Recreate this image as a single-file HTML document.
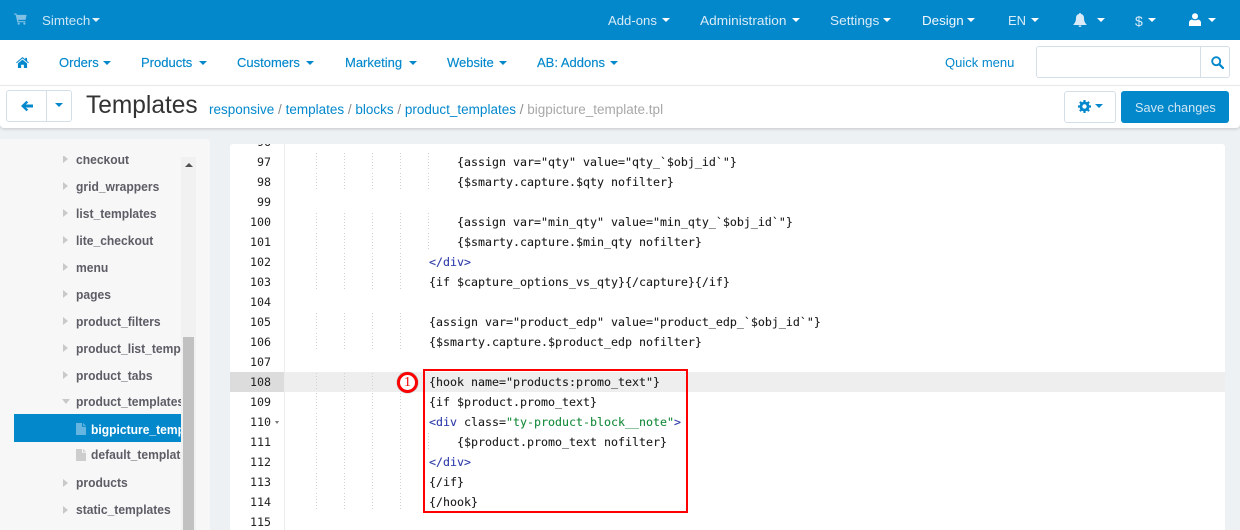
<!DOCTYPE html>
<html><head><meta charset="utf-8"><style>
html,body{margin:0;padding:0}
body{width:1240px;height:530px;overflow:hidden;position:relative;background:#eef1f4;font-family:"Liberation Sans",sans-serif}
.a{position:absolute;white-space:pre}
.t{position:absolute;white-space:pre;font-size:13px;line-height:16px;transform-origin:0 50%}
.c{position:absolute;width:0;height:0;border-left:4.500px solid transparent;border-right:4.500px solid transparent;border-top:4.500px solid currentColor}
.top{color:#d9ebf6}
.nav{color:#0388cc;-webkit-text-stroke:.15px #0388cc}
.tree{position:absolute;font-size:13px;line-height:16px;font-weight:bold;color:#5d5d66;white-space:pre;transform:scaleX(.93);transform-origin:0 50%}
.ar{position:absolute;left:63px;width:0;height:0;border-left:5px solid #c9c9c9;border-top:4px solid transparent;border-bottom:4px solid transparent}
.n{position:absolute;left:0;width:41px;text-align:right;font:11.63px/20px "DejaVu Sans Mono",monospace;color:#222}
.l{position:absolute;left:289px;font:11.63px/20px "DejaVu Sans Mono",monospace;color:#1a1a1a;white-space:pre;-webkit-text-stroke:.1px #1a1a1a}
.b{color:#2c3aa8;-webkit-text-stroke:.1px #2c3aa8}.s{color:#148a3a;-webkit-text-stroke:.1px #148a3a}
</style></head><body>
<div class="a" style="left:0;top:0;width:1240px;height:40px;background:#0388cc"></div>
<div class="a" style="left:0;top:40px;width:1240px;height:45px;background:#fff;border-bottom:1px solid #eef0f2"></div>
<div class="a" style="left:0;top:86px;width:1240px;height:42px;background:#fff;box-shadow:0 1px 3px rgba(0,0,0,.18);border-radius:0 0 4px 4px"></div>

<svg class="a" style="left:14px;top:13px" width="14" height="12" viewBox="0 0 15 13"><path d="M0 0.5H2.600L3 2H13.600L12.400 7.500H4.400L4.700 8.800H12.200V10H3.500L1.700 1.700H0Z" fill="#7fc0e4"/><circle cx="5" cy="11.500" r="1.200" fill="#7fc0e4"/><circle cx="11.200" cy="11.500" r="1.200" fill="#7fc0e4"/></svg>
<div class="t top" style="left:42px;top:12.500px;color:#cfe6f4;transform:scaleX(1.03)">Simtech</div><div class="c" style="left:92px;top:18px;color:#e3f1f9"></div>
<div class="t top" style="left:608px;top:12.500px;transform:scaleX(1.01)">Add-ons</div><div class="c" style="left:662px;top:18px;color:#fff"></div>
<div class="t top" style="left:700px;top:12.500px;transform:scaleX(1.05)">Administration</div><div class="c" style="left:792px;top:18px;color:#fff"></div>
<div class="t top" style="left:830px;top:12.500px;transform:scaleX(1.05)">Settings</div><div class="c" style="left:883px;top:18px;color:#fff"></div>
<div class="t top" style="left:922px;top:12.500px;color:#f2f8fc;transform:scaleX(1.03)">Design</div><div class="c" style="left:967px;top:18px;color:#fff"></div>
<div class="t top" style="left:1008px;top:12.500px">EN</div><div class="c" style="left:1031px;top:18px;color:#fff"></div>
<svg class="a" style="left:1073px;top:13px" width="14" height="14" viewBox="0 0 14 14"><path d="M7 0C7.600 0 8 .4 8 1C10 1.400 11 3 11 5C11 8 12 10 13.500 11.300V12H.5V11.300C2 10 3 8 3 5C3 3 4 1.400 6 1C6 .4 6.400 0 7 0ZM5.500 12.500H8.500C8.500 13.400 7.800 14 7 14C6.200 14 5.500 13.400 5.500 12.500Z" fill="#d9ebf6"/></svg>
<div class="c" style="left:1097px;top:18px;color:#fff"></div>
<div class="t top" style="left:1135px;top:12.500px;font-size:14px">$</div><div class="c" style="left:1148px;top:18px;color:#fff"></div>
<svg class="a" style="left:1189px;top:13px" width="12" height="13" viewBox="0 0 12 13"><circle cx="6" cy="3.200" r="3" fill="#fff"/><path d="M0 13V9.500C0 8 1.500 6.800 3 6.500C4 7.500 8 7.500 9 6.500C10.500 6.800 12 8 12 9.500V13Z" fill="#fff"/></svg>
<div class="c" style="left:1208px;top:18px;color:#fff"></div>

<svg class="a" style="left:16px;top:56.500px" width="13" height="11" viewBox="0 0 14 12"><path d="M7 0L10 2.600V1H12V4.300L14 6L13.300 6.800L7 1.500L.7 6.800L0 6ZM2 7L7 2.800L12 7V12H8.500V8.500H5.500V12H2Z" fill="#0388cc"/></svg>
<div class="t nav" style="left:59px;top:54.500px">Orders</div><div class="c" style="left:103px;top:61px;color:#0388cc"></div>
<div class="t nav" style="left:141px;top:54.500px">Products</div><div class="c" style="left:199px;top:61px;color:#0388cc"></div>
<div class="t nav" style="left:237px;top:54.500px">Customers</div><div class="c" style="left:306px;top:61px;color:#0388cc"></div>
<div class="t nav" style="left:345px;top:54.500px">Marketing</div><div class="c" style="left:409px;top:61px;color:#0388cc"></div>
<div class="t nav" style="left:447px;top:54.500px">Website</div><div class="c" style="left:499px;top:61px;color:#0388cc"></div>
<div class="t nav" style="left:537px;top:54.500px">AB: Addons</div><div class="c" style="left:610px;top:61px;color:#0388cc"></div>
<div class="t nav" style="left:945px;top:54.500px;-webkit-text-stroke:0">Quick menu</div>
<div class="a" style="left:1036px;top:46px;width:192px;height:30px;border:1px solid #d5dfe8;border-radius:3px;background:#fff"></div>
<div class="a" style="left:1200px;top:47px;width:1px;height:30px;background:#d5dfe8"></div>
<svg class="a" style="left:1211px;top:56px" width="13" height="13" viewBox="0 0 13 13"><circle cx="5.200" cy="5.200" r="4" fill="none" stroke="#0388cc" stroke-width="1.900"/><path d="M8.200 8.200L12 12" stroke="#0388cc" stroke-width="2.200" stroke-linecap="round"/></svg>

<div class="a" style="left:6px;top:90px;width:64px;height:30px;border:1px solid #d5dfe8;border-radius:3px;background:#fff"></div>
<div class="a" style="left:46px;top:91px;width:1px;height:30px;background:#d5dfe8"></div>
<svg class="a" style="left:21px;top:100px" width="12" height="12" viewBox="0 0 12 12"><path d="M0 6L5.500 .8L7.200 2.500L4.800 4.500H12V7.500H4.800L7.200 9.500L5.500 11.200Z" fill="#0388cc"/></svg>
<div class="c" style="left:55px;top:103px;color:#0388cc"></div>
<div class="t" style="left:86px;top:90px;font-size:25px;line-height:30px;color:#333;transform:scaleX(.98)">Templates</div>
<div class="t" style="left:209px;top:102px;color:#8a8a8a;font-size:13.500px"><span style="color:#0388cc">responsive</span> / <span style="color:#0388cc">templates</span> / <span style="color:#0388cc">blocks</span> / <span style="color:#0388cc">product_templates</span> / <span style="color:#a8a8a8">bigpicture_template.tpl</span></div>
<div class="a" style="left:1064px;top:91px;width:50px;height:30px;border:1px solid #d5dfe8;border-radius:3px;background:#fff"></div>
<svg class="a" style="left:1078px;top:100px" width="13" height="13" viewBox="0 0 13 13"><circle cx="6.500" cy="6.500" r="3.600" fill="none" stroke="#0388cc" stroke-width="2.800"/><path d="M6.500 0V13M0 6.500H13M1.900 1.900L11.100 11.100M11.100 1.900L1.900 11.100" stroke="#0388cc" stroke-width="2.200" stroke-dasharray="2.200 8.700 2.200 0"/></svg>
<div class="c" style="left:1095px;top:104px;color:#0388cc"></div>
<div class="a" style="left:1121px;top:91px;width:108px;height:32px;background:#0388cc;border-radius:3px"></div>
<div class="t" style="left:1135px;top:99.500px;color:#cfe6f4;transform:scaleX(.98)">Save changes</div>

<div class="a" style="left:0;top:139px;width:210px;height:391px;background:#f7f7f7;border-radius:0 4px 0 0;overflow:hidden">
<div class="a" style="left:181px;top:18px;width:15px;height:373px;background:#f1f1f1"></div>
<div class="a" style="left:183px;top:198px;width:11px;height:193px;background:#c1c1c1"></div>
<div class="a" style="left:185px;top:24px;width:0;height:0;border-left:4px solid transparent;border-right:4px solid transparent;border-bottom:4px solid #505050"></div>
<div class="a" style="left:14px;top:275px;width:167px;height:28px;background:#0388cc"></div>
</div>
<div class="a" style="left:0;top:156px;width:181px;height:374px;overflow:hidden">
<div class="ar" style="top:-1px"></div><div class="tree" style="left:76px;top:-4px">checkout</div>
<div class="ar" style="top:26px"></div><div class="tree" style="left:76px;top:23px">grid_wrappers</div>
<div class="ar" style="top:53px"></div><div class="tree" style="left:76px;top:50px">list_templates</div>
<div class="ar" style="top:80px"></div><div class="tree" style="left:76px;top:77px">lite_checkout</div>
<div class="ar" style="top:107px"></div><div class="tree" style="left:76px;top:104px">menu</div>
<div class="ar" style="top:134px"></div><div class="tree" style="left:76px;top:131px">pages</div>
<div class="ar" style="top:161px"></div><div class="tree" style="left:76px;top:158px">product_filters</div>
<div class="ar" style="top:188px"></div><div class="tree" style="left:76px;top:185px">product_list_templates</div>
<div class="ar" style="top:215px"></div><div class="tree" style="left:76px;top:212px">product_tabs</div>
<div class="a" style="left:62px;top:243px;width:0;height:0;border-top:5px solid #c9c9c9;border-left:4px solid transparent;border-right:4px solid transparent"></div><div class="tree" style="left:76px;top:238px">product_templates</div>
<svg class="a" style="left:76px;top:267px" width="10" height="12" viewBox="0 0 10 13" preserveAspectRatio="none"><path d="M0 0H6V4H10V13H0ZM7 0L10 3H7Z" fill="#66b4e0"/></svg>
<div class="tree" style="left:91px;top:266px;color:#fff">bigpicture_template.tpl</div>
<svg class="a" style="left:76px;top:293px" width="10" height="12" viewBox="0 0 10 13" preserveAspectRatio="none"><path d="M0 0H6V4H10V13H0ZM7 0L10 3H7Z" fill="#cdcdcd"/></svg>
<div class="tree" style="left:91px;top:291px">default_template.tpl</div>
<div class="ar" style="top:323px"></div><div class="tree" style="left:76px;top:319px">products</div>
<div class="ar" style="top:350px"></div><div class="tree" style="left:76px;top:346px">static_templates</div>
</div>

<div class="a" style="left:230px;top:144px;width:995px;height:386px;background:#fff;border-radius:3px 3px 0 0;overflow:hidden"></div>
<div class="a" style="left:284px;top:144px;width:1px;height:386px;background:#ececec"></div>
<div class="a" style="left:230px;top:372px;width:54px;height:20px;background:#dcdcdc"></div>
<div class="a" style="left:285px;top:372px;width:940px;height:20px;background:#eeeeee"></div>

<div class="a" style="left:230px;top:144px;width:995px;height:386px;overflow:hidden">
<div class="n" style="top:-12px">96</div>
<div class="n" style="top:8px">97</div>
<div class="n" style="top:28px">98</div>
<div class="n" style="top:48px">99</div>
<div class="n" style="top:68px">100</div>
<div class="n" style="top:88px">101</div>
<div class="n" style="top:108px">102</div>
<div class="n" style="top:128px">103</div>
<div class="n" style="top:148px">104</div>
<div class="n" style="top:168px">105</div>
<div class="n" style="top:188px">106</div>
<div class="n" style="top:208px">107</div>
<div class="n" style="top:228px">108</div>
<div class="n" style="top:248px">109</div>
<div class="n" style="top:268px">110</div>
<div class="n" style="top:288px">111</div>
<div class="n" style="top:308px">112</div>
<div class="n" style="top:328px">113</div>
<div class="n" style="top:348px">114</div>
<div class="n" style="top:368px">115</div>
</div>
<div class="a" style="left:275px;top:421px;width:0;height:0;border-top:3px solid #777;border-left:2.500px solid transparent;border-right:2.500px solid transparent"></div>

<svg class="a" style="left:316px;top:144px" width="115" height="366"><g stroke="#d0d0d0" stroke-width="1" stroke-dasharray="1 2">
<path d="M.5 9V27M.5 29V47M.5 69V87M.5 89V107M.5 109V127M.5 129V147M.5 169V187M.5 189V207M.5 229V247M.5 249V267M.5 269V287M.5 289V307M.5 309V327M.5 329V347M.5 349V367"/>
<path d="M28.500 9V27M28.500 29V47M28.500 69V87M28.500 89V107M28.500 109V127M28.500 129V147M28.500 169V187M28.500 189V207M28.500 229V247M28.500 249V267M28.500 269V287M28.500 289V307M28.500 309V327M28.500 329V347M28.500 349V367"/>
<path d="M56.500 9V27M56.500 29V47M56.500 69V87M56.500 89V107M56.500 109V127M56.500 129V147M56.500 169V187M56.500 189V207M56.500 229V247M56.500 249V267M56.500 269V287M56.500 289V307M56.500 309V327M56.500 329V347M56.500 349V367"/>
<path d="M84.500 9V27M84.500 29V47M84.500 69V87M84.500 89V107M84.500 109V127M84.500 129V147M84.500 169V187M84.500 189V207M84.500 229V247M84.500 249V267M84.500 269V287M84.500 289V307M84.500 309V327M84.500 329V347M84.500 349V367"/>
<path d="M112.500 9V27M112.500 29V47M112.500 69V87M112.500 89V107M112.500 289V307"/>
</g></svg>

<div class="l" style="top:152px">                        {assign var="qty" value="qty_`$obj_id`"}</div>
<div class="l" style="top:172px">                        {$smarty.capture.$qty nofilter}</div>
<div class="l" style="top:212px">                        {assign var="min_qty" value="min_qty_`$obj_id`"}</div>
<div class="l" style="top:232px">                        {$smarty.capture.$min_qty nofilter}</div>
<div class="l" style="top:252px">                    <span class="b">&lt;/div&gt;</span></div>
<div class="l" style="top:272px">                    {if $capture_options_vs_qty}{/capture}{/if}</div>
<div class="l" style="top:312px">                    {assign var="product_edp" value="product_edp_`$obj_id`"}</div>
<div class="l" style="top:332px">                    {$smarty.capture.$product_edp nofilter}</div>
<div class="l" style="top:372px">                    {hook name="products:promo_text"}</div>
<div class="l" style="top:392px">                    {if $product.promo_text}</div>
<div class="l" style="top:412px">                    <span class="b">&lt;div</span> class=<span class="s">"ty-product-block__note"</span><span class="b">&gt;</span></div>
<div class="l" style="top:432px">                        {$product.promo_text nofilter}</div>
<div class="l" style="top:452px">                    <span class="b">&lt;/div&gt;</span></div>
<div class="l" style="top:472px">                    {/if}</div>
<div class="l" style="top:492px">                    {/hook}</div>

<div class="a" style="left:423px;top:369px;width:261px;height:140px;border:2px solid #f00"></div>
<div class="a" style="left:397px;top:372px;width:15px;height:15px;border:3px solid #f00;border-radius:50%;background:#fff;box-shadow:0 0 1px #555"></div>
<div class="a" style="left:397px;top:372px;width:21px;text-align:center;font:14px/21px 'Liberation Serif',serif;color:#e00">1</div>
</body></html>
